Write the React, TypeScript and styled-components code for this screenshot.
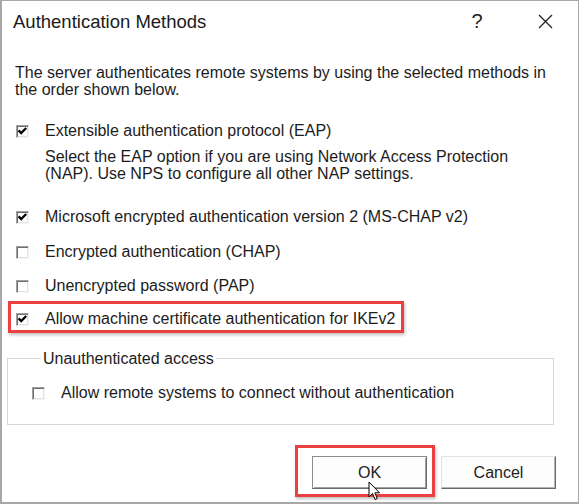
import styled, { createGlobalStyle } from "styled-components";

const GlobalStyle = createGlobalStyle`
  html, body {
    margin: 0;
    padding: 0;
    background: #fff;
  }
  body {
    font-family: "Liberation Sans", Arial, sans-serif;
    color: #1c1c1c;
  }
`;

const Dialog = styled.div`
  box-sizing: border-box;
  width: 579px;
  height: 504px;
  border: 1px solid #a8a8a8;
  border-left-width: 2px;
  border-bottom-width: 2px;
  background: #fff;
  display: flex;
  flex-direction: column;
`;

const TitleBar = styled.div`
  display: flex;
  align-items: center;
  height: 41px;
  padding-left: 11px;
`;

const Title = styled.div`
  flex: 1;
  font-size: 18.5px;
  color: #1a1a1a;
`;

const TitleButton = styled.div<{ $w: number }>`
  width: ${(p) => p.$w}px;
  height: 41px;
  display: flex;
  align-items: center;
  justify-content: center;
  font-size: 20px;
  color: #222;
`;

const Body = styled.div`
  display: flex;
  flex-direction: column;
  padding-left: 13px;
`;

const Intro = styled.p`
  margin: 22px 0 0;
  font-size: 16px;
  line-height: 17px;
`;

const Row = styled.label<{ $top: number; $highlight?: boolean }>`
  position: relative;
  display: flex;
  align-items: center;
  gap: 16px;
  width: fit-content;
  height: 20px;
  margin-top: ${(p) => p.$top}px;
  padding-left: 1px;
  font-size: 16px;

  ${(p) =>
    p.$highlight &&
    `
    &::after {
      content: "";
      position: absolute;
      left: -7px;
      top: -8px;
      right: -9px;
      bottom: -4px;
      border: 3px solid #ea4040;
      box-shadow: 1px 2px 3px rgba(0, 0, 0, 0.25);
      pointer-events: none;
    }
  `}
`;

const Box = styled.span`
  box-sizing: border-box;
  width: 13px;
  height: 13px;
  flex: none;
  display: flex;
  border-top: 1px solid #a0a0a0;
  border-left: 1px solid #a0a0a0;
  border-bottom: 1px solid #f4f4f4;
  border-right: 1px solid #f4f4f4;
  box-shadow: inset 1px 1px 0 #6e6e6e, inset -1px -1px 0 #e3e3e3;
  background: #fff;
`;

const Note = styled.p`
  margin: 7px 0 0 30px;
  font-size: 16px;
  line-height: 17px;
`;

const Group = styled.fieldset`
  margin: 21px 24px 0 5px;
  padding: 16px 0 21px 23px;
  border: 1px solid #d6d6d6;
  min-width: 0;
`;

const Legend = styled.legend`
  margin-left: 10px;
  padding: 0 2px;
  font-size: 16px;
  line-height: 17px;
`;

const Buttons = styled.div`
  display: flex;
  justify-content: flex-end;
  gap: 14px;
  margin-top: 31px;
  padding-right: 22px;
`;

const Button = styled.div<{ $default?: boolean }>`
  position: relative;
  box-sizing: border-box;
  width: 115px;
  height: 33px;
  display: flex;
  align-items: center;
  justify-content: center;
  font-size: 16px;
  color: #222;
  background: #fdfdfd;
  border: 1px solid ${(p) => (p.$default ? "#8c8c8c" : "#e2e2e2")};
  border-right-color: #6a6a6a;
  border-bottom-color: #6a6a6a;
  box-shadow: ${(p) =>
    p.$default
      ? "inset 1px 1px 0 #fff, inset -1px -1px 0 #a0a0a0"
      : "inset -1px -1px 0 #b4b4b4"};

  ${(p) =>
    p.$default &&
    `
    &::after {
      content: "";
      position: absolute;
      left: -18px;
      top: -12px;
      right: -9px;
      bottom: -9px;
      border: 3px solid #ea4040;
      box-shadow: 1px 2px 3px rgba(0, 0, 0, 0.25);
      pointer-events: none;
    }
  `}
`;

const Pointer = styled.svg`
  position: absolute;
  left: 55px;
  top: 24px;
  z-index: 2;
`;

function Check({ checked }: { checked?: boolean }) {
  return (
    <Box>
      {checked && (
        <svg width="11" height="11" viewBox="0 0 11 11">
          <path d="M1.6 4.4 L4.2 7.1 L9.2 2" fill="none" stroke="#000" strokeWidth="2.3" />
        </svg>
      )}
    </Box>
  );
}

export default function App() {
  return (
    <>
      <GlobalStyle />
      <Dialog>
        <TitleBar>
          <Title>Authentication Methods</Title>
          <TitleButton $w={70}>?</TitleButton>
          <TitleButton $w={66}>
            <svg width="15" height="15" viewBox="0 0 15 15">
              <path d="M1 1 L14 14 M14 1 L1 14" stroke="#222" strokeWidth="1.3" />
            </svg>
          </TitleButton>
        </TitleBar>

        <Body>
          <Intro>
            The server authenticates remote systems by using the selected methods in
            <br />
            the order shown below.
          </Intro>

          <Row $top={23}>
            <Check checked />
            Extensible authentication protocol (EAP)
          </Row>
          <Note>
            Select the EAP option if you are using Network Access Protection
            <br />
            (NAP). Use NPS to configure all other NAP settings.
          </Note>
          <Row $top={25}>
            <Check checked />
            Microsoft encrypted authentication version 2 (MS-CHAP v2)
          </Row>
          <Row $top={15}>
            <Check />
            Encrypted authentication (CHAP)
          </Row>
          <Row $top={14}>
            <Check />
            Unencrypted password (PAP)
          </Row>
          <Row $top={13} $highlight>
            <Check checked />
            Allow machine certificate authentication for IKEv2
          </Row>
        </Body>

        <Group>
          <Legend>Unauthenticated access</Legend>
          <Row $top={0}>
            <Check />
            Allow remote systems to connect without authentication
          </Row>
        </Group>

        <Buttons>
          <Button $default>
            OK
            <Pointer width="13" height="20" viewBox="0 0 13 20">
              <path
                d="M1 1 L1 16 L4.5 12.5 L7 18.5 L9.3 17.5 L6.8 11.8 L11.5 11.8 Z"
                fill="#fff"
                stroke="#000"
                strokeWidth="1"
                strokeLinejoin="round"
              />
            </Pointer>
          </Button>
          <Button>Cancel</Button>
        </Buttons>
      </Dialog>
    </>
  );
}
